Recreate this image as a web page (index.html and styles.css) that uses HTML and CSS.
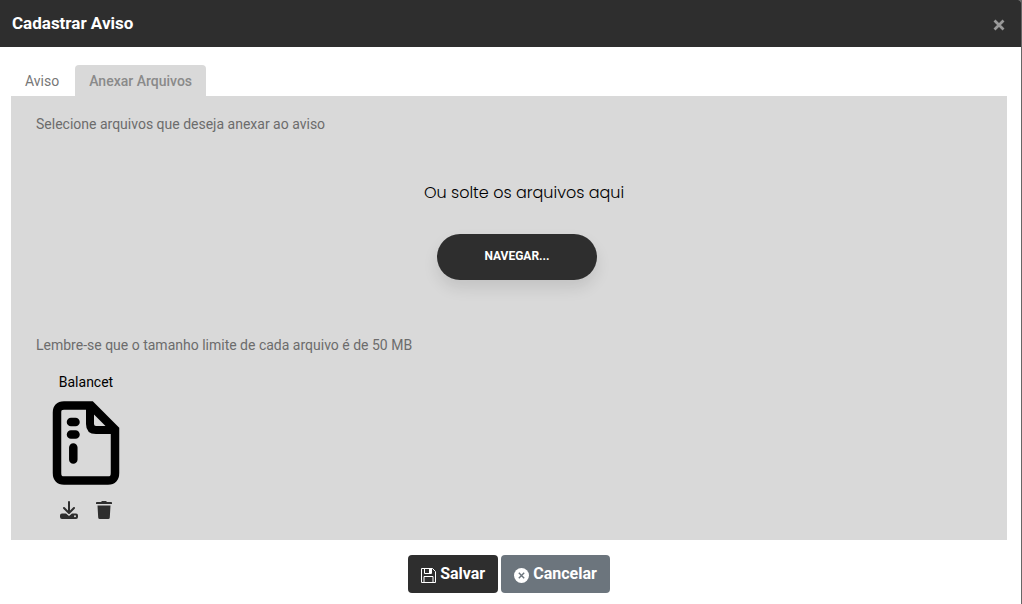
FILE: index.html
```html
<!DOCTYPE html>
<html lang="pt-BR">
<head>
  <meta charset="UTF-8">
  <meta name="viewport" content="width=device-width, initial-scale=1">
  <title>Cadastrar Aviso</title>
  <link rel="stylesheet" href="styles.css">
</head>
<body>

  <div class="modal">
    <header class="modal-header">
      <h1 class="modal-title">Cadastrar Aviso</h1>
      <button type="button" class="close" aria-label="Fechar">
        <svg width="12" height="12" viewBox="0 0 12 12"><path d="M1.500 1.500L10.500 10.500M10.500 1.500L1.500 10.500" stroke="currentColor" stroke-width="2.800"/></svg>
      </button>
    </header>

    <div class="modal-body">
      <nav class="tabs">
        <a class="tab" href="#aviso">Aviso</a>
        <a class="tab active" href="#anexos">Anexar Arquivos</a>
      </nav>

      <section class="panel" id="anexos">
        <p class="hint">Selecione arquivos que deseja anexar ao aviso</p>

        <div class="drop-area">
          <p class="drop-text">Ou solte os arquivos aqui</p>
          <button type="button" class="browse">Navegar...</button>
        </div>

        <p class="hint">Lembre-se que o tamanho limite de cada arquivo é de 50 MB</p>

        <!-- arquivos anexados -->
        <div class="file">
          <span class="file-name">Balancet</span>
          <svg class="file-icon" width="68" height="84" viewBox="0 0 68 84">
            <path d="M12 4.500H39L63 28.500V72Q63 79.500 56 79.500H12Q5 79.500 5 72V11.500Q5 4.500 12 4.500Z" fill="none" stroke="#000" stroke-width="8.500"/>
            <path d="M38 4V23Q38 29 44 29H64" fill="none" stroke="#000" stroke-width="8"/>
            <path d="M19 21H23.500M19 33.500H23.500M21.300 46.500V58.500" fill="none" stroke="#000" stroke-width="8.500" stroke-linecap="round"/>
          </svg>
          <div class="file-actions">
            <button type="button" class="icon-btn" aria-label="Baixar">
              <svg width="18" height="18" viewBox="0 0 18 18">
                <path d="M9 1V11M4 7L9 12L14 7" fill="none" stroke="currentColor" stroke-width="2" stroke-linecap="round" stroke-linejoin="round"/>
                <path fill-rule="evenodd" d="M2 12.500H6L9 15L12 12.500H16Q18 12.500 18 14.500V16Q18 18 16 18H2Q0 18 0 16V14.500Q0 12.500 2 12.500ZM14 15.250A1 1 0 1 0 16 15.250A1 1 0 1 0 14 15.250Z" fill="currentColor"/>
              </svg>
            </button>
            <button type="button" class="icon-btn" aria-label="Excluir">
              <svg width="16" height="18" viewBox="0 0 16 18">
                <path d="M0 1.500Q0 1 1 1H5L6 0H10L11 1H15Q16 1 16 1.500V3H0ZM1.500 4.500H14.500L13.800 16.500Q13.700 18 12.200 18H3.800Q2.300 18 2.200 16.500Z" fill="currentColor"/>
              </svg>
            </button>
          </div>
        </div>
      </section>
    </div>

    <footer class="modal-footer">
      <button type="button" class="btn btn-save">
        <svg width="15" height="15" viewBox="0 0 15 15">
          <path d="M.5.5H11.500L14.500 3.500V14.500H.5ZM3.500.5V5.500H10.500V.5M3 14.500V8.500H12V14.500" fill="none" stroke="currentColor"/>
          <path d="M8 1H10V5H8Z" fill="currentColor"/>
        </svg>
        Salvar
      </button>
      <button type="button" class="btn btn-cancel">
        <svg width="15" height="15" viewBox="0 0 15 15">
          <circle cx="7.500" cy="7.500" r="7.500" fill="currentColor"/>
          <path d="M4.800 4.800L10.200 10.200M10.200 4.800L4.800 10.200" stroke="#6c757d" stroke-width="1.400"/>
        </svg>
        Cancelar
      </button>
    </footer>
  </div>

</body>
</html>
```
FILE: styles.css
```css
* {
  box-sizing: border-box;
}

body {
  margin: 0;
  background-color: #666;
  font-family: Roboto, sans-serif;
  font-size: 14px;
  line-height: 20px;
}

button {
  font-family: inherit;
  border: 0;
  cursor: pointer;
}

svg {
  display: block;
}

.modal {
  min-height: 100vh;
  margin-right: 1px;
  background-color: #fff;
  border-top-right-radius: 3px;
  overflow: hidden;
}

/* cabeçalho */
.modal-header {
  display: flex;
  align-items: center;
  justify-content: space-between;
  padding: 11px 16px 12px 12px;
  background-color: #2e2e2e;
}

.modal-title {
  margin: 0;
  font-size: 17px;
  font-weight: 700;
  line-height: 24px;
  color: #fff;
}

.close {
  padding: 4px 0 0;
  background: none;
  color: #999;
}

.modal-body {
  padding: 18px 14px 0 11px;
}

/* abas */
.tabs {
  display: flex;
}

.tab {
  padding: 6px 14px 5px;
  border-radius: 4px 4px 0 0;
  color: #777;
  text-decoration: none;
}

.tab.active {
  margin-left: 2px;
  background-color: #d9d9d9;
  color: #8a8a8a;
  font-weight: 500;
}

.panel {
  padding: 18px 25px 21px;
  background-color: #d9d9d9;
}

.hint {
  margin: 0;
  color: #6c6c6c;
}

/* area de soltar arquivos */
.drop-area {
  display: flex;
  flex-direction: column;
  align-items: center;
  padding: 47px 0 55px 16px;
}

.drop-text {
  margin: 0 0 29px;
  padding-left: 14px;
  font-family: Poppins, Inter, sans-serif;
  font-size: 16px;
  font-weight: 300;
  line-height: 24px;
  color: #000;
}

.browse {
  width: 160px;
  height: 46px;
  padding: 0 0 2px;
  border-radius: 23px;
  background-color: #2e2e2e;
  box-shadow: 0 8px 15px rgba(0, 0, 0, 0.1);
  color: #fff;
  font-size: 12px;
  font-weight: 700;
  text-transform: uppercase;
}

.file {
  display: flex;
  flex-direction: column;
  align-items: center;
  width: 100px;
  margin-top: 17px;
  color: #000;
}

.file-icon {
  margin-top: 9px;
}

.file-actions {
  display: flex;
  gap: 18px;
  margin-top: 16px;
}

.icon-btn {
  padding: 0;
  background: none;
  color: #2e2e2e;
}

/* rodapé */
.modal-footer {
  display: flex;
  justify-content: center;
  gap: 3px;
  padding: 15px 14px 11px 11px;
}

.btn {
  display: flex;
  align-items: center;
  gap: 4px;
  height: 38px;
  padding: 0 13px 2px;
  border-radius: 4px;
  color: #fff;
  font-size: 16px;
  font-weight: 700;
}

.btn svg {
  margin-top: 5px;
}

.btn-save {
  background-color: #2e2e2e;
}

.btn-cancel {
  background-color: #6c757d;
}
```
